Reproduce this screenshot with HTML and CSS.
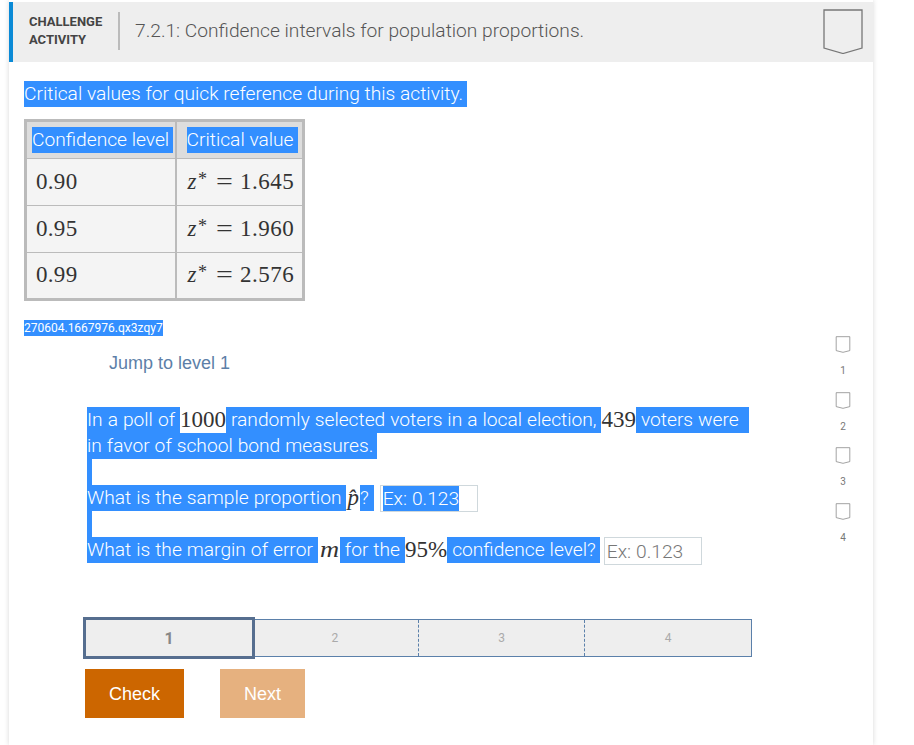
FILE: index.html
```html
<!DOCTYPE HTML>
<html>
<head>
	<meta http-equiv="Content-Type" content="text/html; charset=utf-8">
	<title>Challenge activity</title>
	<link rel="stylesheet" href="styles.css">
</head>
<body>
<div class="card">
	<div class="header">
		<div class="label">CHALLENGE<br>ACTIVITY</div>
		<div class="title">7.2.1: Confidence intervals for population proportions.</div>
		<svg class="badge" width="40" height="45" viewBox="0 0 40 45">
			<path d="M1 1H39V39L20 44.500L1 39Z" fill="none" stroke="#777" stroke-width="1.300"/>
		</svg>
	</div>
	<div class="content">
		<div class="main">
			<p class="intro"><span class="sel tail">Critical values for quick reference during this activity.</span></p>
			<table class="values">
				<tr>
					<th class="col1"><span class="sel tail">Confidence level</span></th>
					<th class="col2"><span class="sel tail">Critical value</span></th>
				</tr>
				<tr>
					<td class="math">0.90</td>
					<td class="math value"><i>z</i><sup>*</sup><span class="eq">=</span>1.645</td>
				</tr>
				<tr>
					<td class="math">0.95</td>
					<td class="math value"><i>z</i><sup>*</sup><span class="eq">=</span>1.960</td>
				</tr>
				<tr>
					<td class="math">0.99</td>
					<td class="math value"><i>z</i><sup>*</sup><span class="eq">=</span>2.576</td>
				</tr>
			</table>
			<div class="code"><span class="sel">270604.1667976.qx3zqy7</span></div>
			<div class="jump">Jump to level 1</div>
			<div class="question">
				<div class="line"><span class="sel">In a poll of </span><span class="math">1000</span><span class="sel"> randomly selected voters in a local election, </span><span class="math">439</span><span class="sel"> voters were  </span></div>
				<div class="line"><span class="sel tail">in favor of school bond measures.</span></div>
				<div class="line"><span class="sel stripe"></span></div>
				<div class="line"><span class="sel">What is the sample proportion </span><span class="math hat"><i>p̂</i></span><span class="sel">? </span><span class="field first"><span class="sel">Ex: 0.123</span></span></div>
				<div class="line"><span class="sel stripe"></span></div>
				<div class="line"><span class="sel">What is the margin of error </span><span class="math wide"><i>m</i></span><span class="sel"> for the </span><span class="math">95%</span><span class="sel tail"> confidence level?</span><span class="field second">Ex: 0.123</span></div>
			</div>
			<div class="steps">
				<div class="step current">1</div>
				<div class="step">2</div>
				<div class="step dashed">3</div>
				<div class="step dashed">4</div>
			</div>
			<div class="buttons">
				<div class="btn check">Check</div>
				<div class="btn next">Next</div>
			</div>
		</div>
		<div class="levels">
			<div class="level">
				<svg width="22" height="25" viewBox="0 0 22 25"><path d="M1 1H21V21.500L11 24L1 21.500Z" fill="none" stroke="#777" stroke-width="1"/></svg>
				<span class="num">1</span>
			</div>
			<div class="level">
				<svg width="22" height="25" viewBox="0 0 22 25"><path d="M1 1H21V21.500L11 24L1 21.500Z" fill="none" stroke="#777" stroke-width="1"/></svg>
				<span class="num">2</span>
			</div>
			<div class="level">
				<svg width="22" height="25" viewBox="0 0 22 25"><path d="M1 1H21V21.500L11 24L1 21.500Z" fill="none" stroke="#777" stroke-width="1"/></svg>
				<span class="num">3</span>
			</div>
			<div class="level">
				<svg width="22" height="25" viewBox="0 0 22 25"><path d="M1 1H21V21.500L11 24L1 21.500Z" fill="none" stroke="#777" stroke-width="1"/></svg>
				<span class="num">4</span>
			</div>
		</div>
	</div>
</div>
</body>
</html>
```

FILE: styles.css
```css
*{
	margin: 0;
	padding: 0;
	box-sizing: border-box;
}
html, body{
	height: 745px;
	overflow: hidden;
	background: #fff;
}
body{
	font-family: Roboto, "Liberation Sans", sans-serif;
	color: #333;
}
.card{
	width: 864px;
	height: 745px;
	margin-left: 9px;
	padding-top: 2px;
	box-shadow: 0 0 5px rgba(0, 0, 0, 0.16);
}
.sel{
	display: inline-block;
	background: #338fff;
	color: #fff;
	white-space: pre;
	vertical-align: top;
}
.tail{
	padding-right: 4px;
}

.header{
	height: 60px;
	display: flex;
	align-items: flex-start;
	background: #eee;
	border-left: 4px solid #0a8ad6;
}
.label{
	width: 89px;
	margin: 11px 0 0 16px;
	font-size: 13px;
	font-weight: 700;
	line-height: 18px;
	color: #444;
}
.title{
	height: 38px;
	flex: 1;
	margin-top: 10px;
	padding-left: 15px;
	border-left: 2px solid #bbb;
	font-size: 19.200px;
	font-weight: 300;
	line-height: 38px;
	color: #555;
}
.badge{
	margin: 7px 10px 0 0;
}

.content{
	display: flex;
}
.main{
	width: 820px;
	padding: 19px 0 0 15px;
}
.intro{
	font-size: 19.200px;
	font-weight: 300;
	line-height: 26px;
}

.values{
	width: 281px;
	height: 182px;
	margin-top: 12px;
	table-layout: fixed;
	border-collapse: collapse;
	border: 3px solid #bbb;
	background: #f4f4f4;
}
.values tr{
	height: 46px;
}
.values tr:first-child{
	height: 37px;
}
.values th{
	padding-left: 5px;
	background: #ddd;
	border-right: 2px solid #bbb;
	font-size: 19.200px;
	font-weight: 300;
	line-height: 26px;
	text-align: left;
	white-space: nowrap;
}
.values th.col2{
	padding-left: 10px;
}
.values td{
	padding-left: 9px;
	border: 1px solid #bbb;
	border-right: 2px solid #bbb;
	letter-spacing: 0.300px;
}
.values td.value{
	padding-left: 11px;
	letter-spacing: 0.500px;
}
.col1{
	width: 150px;
}
.math{
	font-family: "Liberation Serif", serif;
	font-size: 23px;
	color: #333;
}
.values sup{
	padding-left: 1px;
	font-size: 18px;
	line-height: 0;
	vertical-align: 4px;
}
.eq{
	margin: 0 8px 0 11px;
	display: inline-block;
	transform: scaleX(1.300);
}
.hat{
	padding: 0 1px;
}
.wide{
	display: inline-block;
	width: 22px;
	padding-left: 2px;
}
.wide i{
	display: inline-block;
	transform: scaleX(1.150);
	transform-origin: left;
}
.code{
	margin-top: 19px;
	font-size: 12px;
	line-height: 16px;
}
.jump{
	margin: 14px 0 0 85px;
	font-family: "Liberation Sans", sans-serif;
	font-size: 18px;
	line-height: 26px;
	color: #5d7fa8;
}

.question{
	margin: 31px 0 0 63px;
	font-size: 19.200px;
	font-weight: 300;
	word-spacing: 0.300px;
}
.line{
	height: 26px;
	line-height: 26px;
	white-space: nowrap;
}
.stripe{
	width: 5px;
	height: 26px;
}
.field{
	display: inline-block;
	width: 98px;
	height: 27px;
	margin-left: 6px;
	padding-left: 2px;
	background: #fff;
	border: 1px solid #cfd8dc;
	line-height: 25px;
	vertical-align: top;
	color: #777;
}
.field.second{
	height: 28px;
	margin-left: 4px;
	line-height: 27px;
}

.steps{
	display: flex;
	width: 667px;
	height: 38px;
	margin: 56px 0 0 61px;
	background: #eee;
	border: 1px solid #5b80aa;
}
.step{
	flex: 1;
	display: flex;
	align-items: center;
	justify-content: center;
	font-size: 12px;
	color: #aaa;
}
.step.dashed{
	border-left: 1px dashed #5b80aa;
}
.current{
	flex: none;
	width: 172px;
	height: 42px;
	margin: -3px -3px -3px -3px;
	background: #eee;
	border: 3px solid #566e8f;
	font-size: 16px;
	font-weight: 700;
	color: #888;
}

.buttons{
	display: flex;
	gap: 36px;
	margin: 12px 0 0 61px;
}
.btn{
	height: 49px;
	font-family: "Liberation Sans", sans-serif;
	font-size: 18px;
	line-height: 50px;
	text-align: center;
	color: #fff;
}
.check{
	width: 99px;
	background: #cc6600;
}
.next{
	width: 85px;
	background: #e6b17f;
}

.levels{
	display: flex;
	flex-direction: column;
	gap: 14.670px;
	width: 22px;
	margin: 274px 0 0 3px;
}
.level{
	display: flex;
	flex-direction: column;
	align-items: center;
	height: 41px;
}
.num{
	margin-top: 12px;
	font-size: 10px;
	line-height: 12px;
	color: #777;
}
```
